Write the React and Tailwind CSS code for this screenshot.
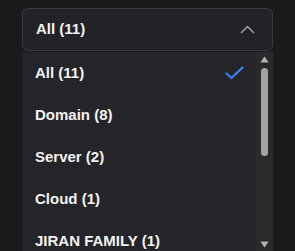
import { useState } from 'react';

const options = [
  { label: 'All (11)', value: 'all' },
  { label: 'Domain (8)', value: 'domain' },
  { label: 'Server (2)', value: 'server' },
  { label: 'Cloud (1)', value: 'cloud' },
  { label: 'JIRAN FAMILY (1)', value: 'jiran' },
];

export default function App() {
  const [selected, setSelected] = useState('all');
  const current = options.find((o) => o.value === selected);

  return (
    <div
      className="w-[295px] h-[251px] overflow-hidden bg-[#1b1b1d] pt-2 px-[22px]"
      style={{ fontFamily: '"Liberation Sans", Arial, sans-serif' }}
    >
      {/* Trigger */}
      <button className="w-full h-[43px] flex items-center justify-between pl-[13px] pr-[17px] rounded-md border border-[#3a3a3f] bg-[#232327] text-[15px] font-bold text-[#f2f2f2]">
        <span>{current.label}</span>
        <svg width="15" height="9" viewBox="0 0 15 9" fill="none">
          <path d="M1.5 7.5 7.5 1.5 13.5 7.5" stroke="#9a9aa0" strokeWidth="1.6" strokeLinecap="round" strokeLinejoin="round" />
        </svg>
      </button>

      {/* Menu */}
      <div className="mt-[1px] h-[200px] flex bg-[#252529]">
        <ul className="flex-1 pt-[0px]">
          {options.map((o) => (
            <li
              key={o.value}
              onClick={() => setSelected(o.value)}
              className="h-[42px] flex items-center justify-between pl-[13px] pr-[12px] text-[15px] font-bold text-[#f2f2f2] cursor-pointer"
            >
              <span>{o.label}</span>
              {o.value === selected && (
                <svg width="19" height="14" viewBox="0 0 19 14" fill="none">
                  <path d="M1.5 7.5 6.5 12 17.5 1.5" stroke="#3b82f6" strokeWidth="2.2" strokeLinecap="round" strokeLinejoin="round" />
                </svg>
              )}
            </li>
          ))}
        </ul>

        {/* Scrollbar */}
        <div className="w-[17px] flex flex-col items-center bg-[#2a2a2d] py-[4px]">
          <svg width="9" height="7" viewBox="0 0 9 7">
            <path d="M4.5 0.5 8.5 6.5 0.5 6.5Z" fill="#b5b5b5" />
          </svg>
          <div className="mt-[5px] w-[7px] h-[88px] rounded-full bg-[#a3a3a3]" />
          <div className="flex-1" />
          <svg width="9" height="7" viewBox="0 0 9 7">
            <path d="M0.5 0.5 8.5 0.5 4.5 6.5Z" fill="#b5b5b5" />
          </svg>
        </div>
      </div>
    </div>
  );
}
